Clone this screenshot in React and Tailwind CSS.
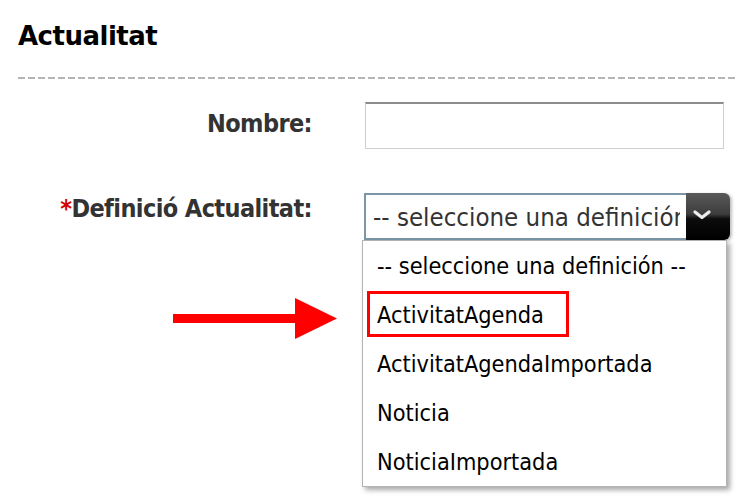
import React from 'react'

const options = [
  '-- seleccione una definición --',
  'ActivitatAgenda',
  'ActivitatAgendaImportada',
  'Noticia',
  'NoticiaImportada',
]

function ArrowPointer() {
  return (
    <svg
      className="absolute left-[170px] top-[295px]"
      width="170"
      height="46"
      viewBox="0 0 170 46"
    >
      <rect x="3" y="19" width="128" height="9" fill="#ff0000" />
      <polygon points="125,3 167,23.5 125,44" fill="#ff0000" />
    </svg>
  )
}

function Chevron() {
  return (
    <svg width="20" height="12" viewBox="0 0 20 12" className="-ml-[12px] mt-[-4px]">
      <path d="M3 3 L10 8.5 L17 3" fill="none" stroke="#ededed" strokeWidth="3.2" strokeLinecap="round" strokeLinejoin="round" />
    </svg>
  )
}

export default function App() {
  const labelFont = { fontFamily: '"DejaVu Sans Condensed", "DejaVu Sans", sans-serif' }
  return (
    <div className="relative w-[738px] h-[498px] overflow-hidden bg-white">
      <div className="pl-[18px]">
        <h1
          className="pt-[21px] text-[26px] leading-[31px] font-bold tracking-[-0.5px] text-black"
          style={{ fontFamily: '"DejaVu Sans", sans-serif' }}
        >
          Actualitat
        </h1>
        <div className="mt-[25px] h-[2px] bg-[repeating-linear-gradient(90deg,#b5b5b5_0_7px,transparent_7px_10px)]" />
      </div>

      <div className="mt-[23px] grid grid-cols-[312px_1fr] gap-x-[53px] gap-y-[44px]" style={labelFont}>
        <div className="pt-[7px] text-right text-[25px] leading-[30px] font-bold tracking-[-0.6px] text-[#333]">
          Nombre:
        </div>
        <div className="h-[47px] w-[359px] border border-[#cfcfcf] border-t-2 border-t-[#8c8c8c] bg-white" />

        <div className="pt-[1px] text-right text-[25px] leading-[30px] font-bold tracking-[-0.6px] text-[#333]">
          <span className="text-[#d40000]">*</span>Definició Actualitat:
        </div>
        <div className="-ml-px flex h-[47px] w-[366px]">
          <div className="flex min-w-0 flex-1 border-2 border-r-0 border-[#7b97a7] bg-white pl-[7px] pr-[6px]">
            <div className="min-w-0 flex-1 overflow-hidden">
              <span className="block whitespace-nowrap pt-[8px] text-[25.6px] leading-[28px] text-[#333]">
                -- seleccione una definición --
              </span>
            </div>
          </div>
          <div className="flex w-[44px] shrink-0 items-center justify-center rounded-r-[6px] bg-[linear-gradient(180deg,#5a5a5a_0%,#3c3c3c_45%,#0c0c0c_55%,#000_100%)] shadow-[2px_1px_3px_rgba(0,0,0,0.25)]">
            <Chevron />
          </div>
        </div>
      </div>

      <ul
        className="absolute left-[362px] top-[240px] w-[365px] border border-[#b3b3b3] bg-white shadow-[3px_3px_5px_rgba(0,0,0,0.35)]"
        style={labelFont}
      >
        {options.map((opt, i) => (
          <li key={opt} className="relative h-[49px] pl-[14px] text-[23.3px] leading-[49px] text-black whitespace-nowrap">
            {i === 1 && (
              <span className="absolute left-[4px] top-[1px] h-[46px] w-[202px] border-[3px] border-[#ff0000]" />
            )}
            <span className="relative">{opt}</span>
          </li>
        ))}
      </ul>

      <ArrowPointer />
    </div>
  )
}
